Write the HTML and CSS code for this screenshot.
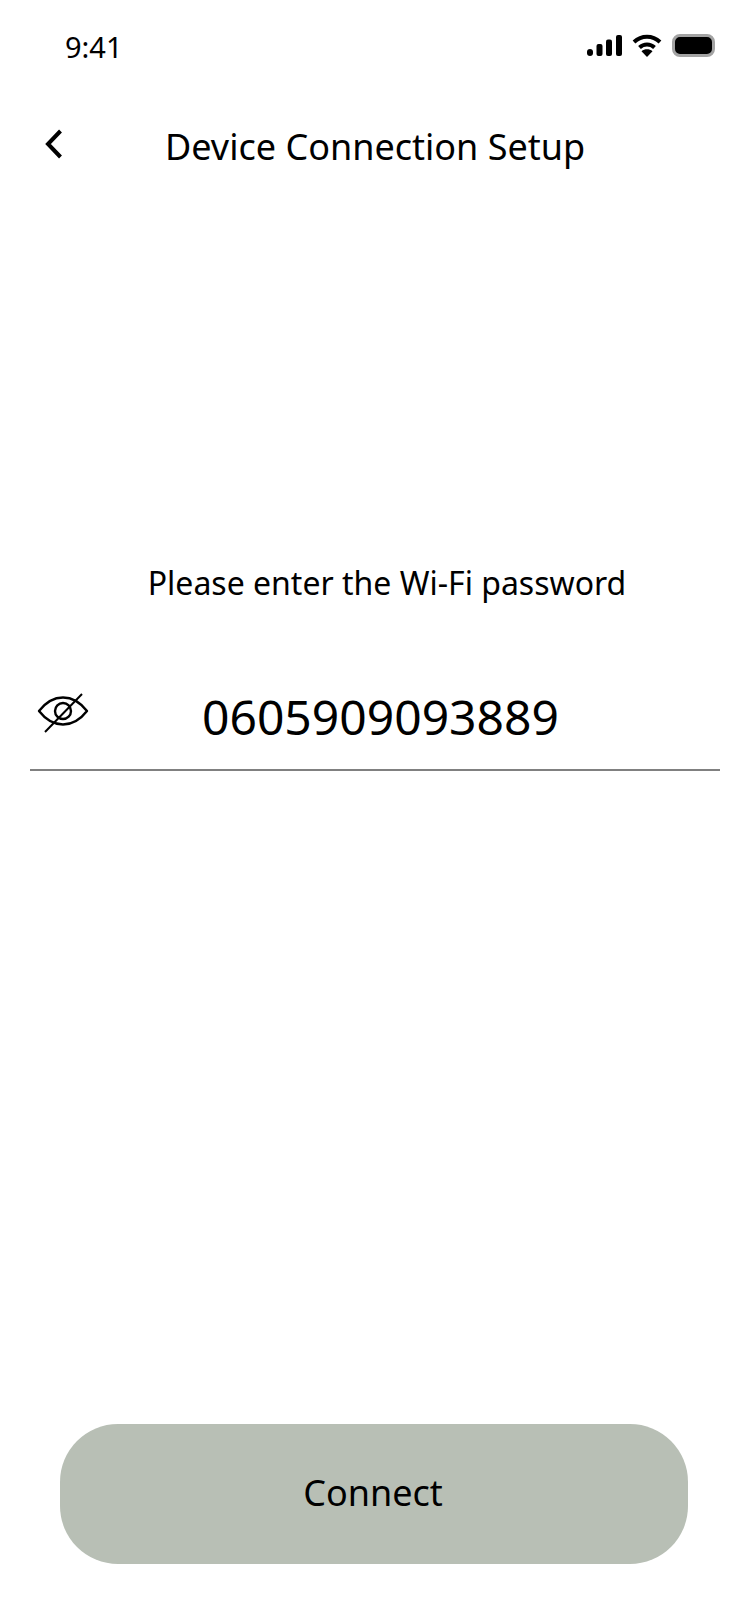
FILE: index.html
```html
<!DOCTYPE html>
<html>
<head>
  <title>Device Connection Setup</title>
  <link rel="stylesheet" href="styles.css">
</head>
<body>
  <div class="phone">
    <div class="status-bar">
      <span class="time">9:41</span>
      <div class="status-icons">
        <svg width="35" height="21" viewBox="0 0 35 21">
          <rect x="0" y="14" width="6" height="7" rx="3" fill="#000"/>
          <rect x="9.5" y="9" width="6" height="12" rx="2" fill="#000"/>
          <rect x="19" y="4.5" width="6" height="16.5" rx="2" fill="#000"/>
          <rect x="29" y="0" width="6" height="21" rx="2" fill="#000"/>
        </svg>
        <svg width="30" height="23" viewBox="0 0 30 23">
          <path d="M2 8C9.5 1 20.5 1 28 8" fill="none" stroke="#000" stroke-width="4"/>
          <path d="M7.5 13.500C11.800 9.500 18.200 9.500 22.500 13.500" fill="none" stroke="#000" stroke-width="4"/>
          <path d="M15 23L9.500 17.300C12.600 14.700 17.400 14.700 20.500 17.300Z" fill="#000"/>
        </svg>
        <div class="battery"></div>
      </div>
    </div>

    <div class="nav-bar">
      <svg class="back" width="20" height="30" viewBox="0 0 20 30">
        <path d="M16.500 2L4 15L16.500 28" fill="none" stroke="#000" stroke-width="4"/>
      </svg>
      <h1 class="title">Device Connection Setup</h1>
    </div>

    <p class="prompt">Please enter the Wi-Fi password</p>

    <div class="password-row">
      <svg class="eye" width="52" height="42" viewBox="0 0 52 42">
        <path d="M2 19C9 10 17 5.500 26 5.500C35 5.500 43 10 50 19C43 28 35 32.500 26 32.500C17 32.500 9 28 2 19Z" fill="none" stroke="#000" stroke-width="2.400" stroke-linejoin="round"/>
        <circle cx="26" cy="19" r="8" fill="none" stroke="#000" stroke-width="2.400"/>
        <path d="M45 2L8 40" fill="none" stroke="#000" stroke-width="2"/>
      </svg>
      <span class="password">0605909093889</span>
    </div>

    <button class="connect">Connect</button>
  </div>
</body>
</html>
```

FILE: styles.css
```css
body {
  margin: 0;
  background-color: #fff;
  color: #000;
  font-family: "Noto Sans", sans-serif;
}

.phone {
  display: flex;
  flex-direction: column;
  width: 750px;
  height: 1624px;
  overflow: hidden;
}

.status-bar {
  display: flex;
  justify-content: space-between;
  align-items: center;
  height: 40px;
  margin-top: 25px;
  padding: 0 35px 0 65px;
}

.time {
  padding-top: 2px;
  font-size: 29px;
}

.status-icons {
  display: flex;
  align-items: center;
  gap: 10px;
}

.battery {
  width: 37px;
  height: 17px;
  border: 3px solid #a3a3a3;
  border-radius: 8px;
  background-color: #000;
}

.nav-bar {
  display: flex;
  align-items: center;
  height: 60px;
  margin-top: 51px;
  padding-left: 44px;
}

.back {
  margin-top: -4px;
}

.title {
  margin: 0 0 0 101px;
  font-size: 36px;
  font-weight: 400;
}

.prompt {
  margin: 385px 0 0 24px;
  text-align: center;
  font-size: 32px;
}

.password-row {
  display: flex;
  align-items: center;
  height: 90px;
  margin: 67px 30px 0;
  padding: 0 0 8px 7px;
  border-bottom: 2px solid #808080;
}

.eye {
  margin-top: -6px;
}

.password {
  margin-left: 113px;
  font-size: 48px;
}

.connect {
  width: 628px;
  height: 140px;
  margin: 653px 0 0 60px;
  padding: 0 2px 4px 0;
  border: none;
  border-radius: 58px;
  background-color: #b8bfb5;
  color: #000;
  font-family: "Noto Sans", sans-serif;
  font-size: 36px;
}
```
